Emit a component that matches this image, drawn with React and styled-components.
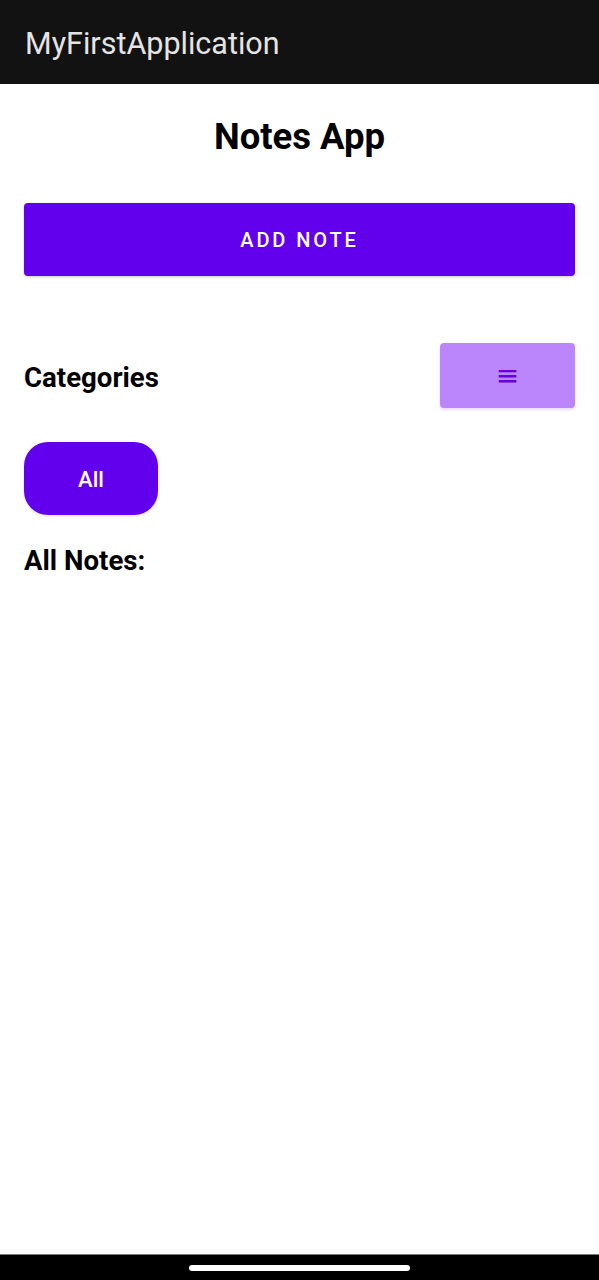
import styled, { createGlobalStyle } from "styled-components";

const GlobalStyle = createGlobalStyle`
  html, body {
    margin: 0;
    padding: 0;
    background: #ffffff;
  }

  body {
    font-family: Roboto, "Noto Sans", sans-serif;
  }

  * {
    box-sizing: border-box;
  }
`;

const Screen = styled.div`
  display: flex;
  flex-direction: column;
  width: 100vw;
  height: 100vh;
  overflow: hidden;
  background: #ffffff;
`;

const AppBar = styled.header`
  display: flex;
  align-items: center;
  height: 84px;
  padding: 3px 25px 0;
  background: #121212;
  color: #e4e4e4;
  font-size: 30.5px;
  font-weight: 400;
  flex-shrink: 0;
`;

const Content = styled.main`
  flex: 1;
  display: flex;
  flex-direction: column;
  padding: 0 24px;
`;

const PageTitle = styled.h1`
  margin: 32px 0 0;
  text-align: center;
  font-size: 36.5px;
  font-weight: 700;
  line-height: 42px;
  color: #000000;
`;

const AddButton = styled.button`
  margin-top: 45px;
  height: 73px;
  width: 100%;
  border: none;
  border-radius: 4px;
  background: #6200ee;
  color: #ffffff;
  font-family: Roboto, sans-serif;
  font-size: 20px;
  font-weight: 500;
  letter-spacing: 2.9px;
  box-shadow: 0 1px 3px rgba(0, 0, 0, 0.2);
`;

const CategoryRow = styled.div`
  display: flex;
  align-items: center;
  justify-content: space-between;
  margin-top: 67px;
`;

const SectionLabel = styled.h2`
  margin: ${(p) => p.$top || 0}px 0 0;
  font-size: 27.6px;
  font-weight: 700;
  line-height: 32px;
  color: #000000;
`;

const CategoryLabel = styled(SectionLabel)`
  padding-top: 4px;
`;

const MenuButton = styled.button`
  width: 135px;
  height: 65px;
  border: none;
  border-radius: 4px;
  background: #bb86fc;
  color: #6a00d8;
  font-family: "DejaVu Sans", sans-serif;
  font-size: 28px;
  font-weight: 400;
  line-height: 1;
  box-shadow: 0 2px 3px rgba(98, 0, 238, 0.15);
  display: flex;
  align-items: center;
  justify-content: center;
`;

const ChipRow = styled.div`
  display: flex;
  margin-top: 34px;
`;

const Chip = styled.button`
  width: 134px;
  height: 73px;
  border: none;
  border-radius: 24px;
  background: #6200ee;
  color: #ffffff;
  font-family: Roboto, sans-serif;
  font-size: 22px;
  font-weight: 500;
  padding-top: 2px;
  box-shadow: 0 1px 3px rgba(0, 0, 0, 0.15);
`;

const NavBar = styled.footer`
  display: flex;
  align-items: center;
  justify-content: center;
  height: 26px;
  flex-shrink: 0;
  background: #000000;
  border-top: 1px solid #7a7a7a;
`;

const HomeHandle = styled.div`
  width: 221px;
  height: 6px;
  border-radius: 3px;
  background: #ffffff;
`;

export default function App() {
  return (
    <Screen>
      <GlobalStyle />
      <AppBar>MyFirstApplication</AppBar>
      <Content>
        <PageTitle>Notes App</PageTitle>
        <AddButton>ADD NOTE</AddButton>
        <CategoryRow>
          <CategoryLabel>Categories</CategoryLabel>
          <MenuButton>≡</MenuButton>
        </CategoryRow>
        <ChipRow>
          <Chip>All</Chip>
        </ChipRow>
        <SectionLabel $top={30}>All Notes:</SectionLabel>
      </Content>
      <NavBar>
        <HomeHandle />
      </NavBar>
    </Screen>
  );
}
